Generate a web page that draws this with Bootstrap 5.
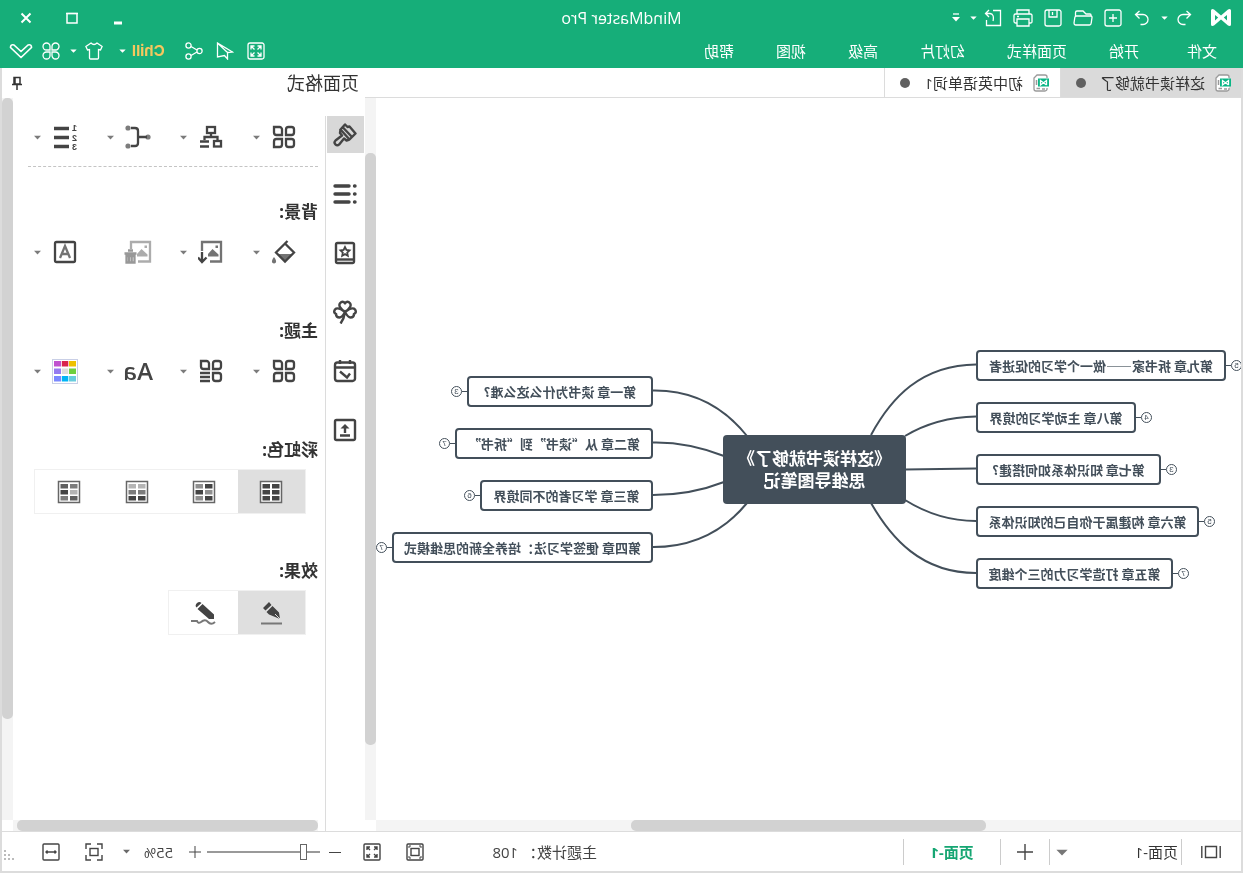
<!DOCTYPE html>
<html lang="zh-CN">
<head>
<meta charset="utf-8">
<meta name="viewport" content="width=device-width, initial-scale=1">
<title>MindMaster Pro</title>
<link href="https://cdn.jsdelivr.net/npm/bootstrap@5.3.0/dist/css/bootstrap.min.css" rel="stylesheet">
<style>
:root{--green:#16ae79;--ink:#444;--line:#dcdcdc;--track:#f4f4f4;--thumb:#d2d2d2;--node:#434f5a}
body{font-family:"Open Sans","Noto Sans CJK SC",sans-serif;font-size:15px;line-height:20px;color:#333;background:#fff;overflow:hidden}
/* the whole window is shown mirrored */
.app-window{height:100vh;min-height:700px;transform:scaleX(-1)}
.app-window button{border:0;background:none;padding:0;color:inherit;display:flex;align-items:center;justify-content:center;flex:none}
svg{display:block;fill:none;stroke:currentColor;stroke-width:2;flex:none}
.solid{fill:currentColor;stroke:none}
.app-head{background:var(--green);color:#fff}
.title-row{height:35px;padding:0 3px}
.title-row .side{flex:1 1 0}
.app-title{font-size:16px}
.menu-row{height:33px;padding:0 10px 2px 26px}
.app-head svg{stroke-width:1.3}
.w8{width:8px}.w18{width:18px}.w20{width:20px}.w22{width:22px}.w24{width:24px}.w28{width:28px}.w30{width:30px}.w31{width:31px}.w32{width:32px}.w38{width:38px}.w43{width:43px}.w45{width:45px}.w46{width:46px}.w48{width:48px}.w59{width:59px}.w96{width:96px}
.logo{margin:0 17px 0 9px}
.menu-list{gap:42px}
.menu-list a{color:#fff;text-decoration:none}
.menu-list a:first-child{margin-right:6px}
.chill{font-weight:700;font-family:Inter,sans-serif;color:#f6c75e!important;margin-left:14px!important}
.app-body{border:solid var(--line);border-width:0 2px}
.doc-tabs{height:30px;border-bottom:1px solid var(--line)}
.app-window .doc-tab{gap:10px;padding:0 15px 0 10px;border-right:1px solid var(--line);height:29px}
.app-window .doc-tab.current{background:#dadada}
.app-window .doc-tab+.doc-tab{margin-left:1px}
.dot{width:10px;height:10px;border-radius:50%;background:#606060;margin-left:4px}
.vbar{width:11px;background:var(--track);flex:none}
.hbar{height:11px;background:var(--track);flex:none}
.thumb{background:var(--thumb);border-radius:5px}
.map-vthumb{height:82%;margin-top:55px}
.map-hthumb{width:41%;height:11px;margin-left:255px}
.map-view{overflow:hidden}
.board{position:relative;width:865px;height:722px;margin:0 auto;flex:none}
.board>svg{position:absolute;inset:0;color:var(--node)}
.topic{position:absolute;display:flex;align-items:center;font-family:"Noto Sans CJK SC",sans-serif;font-size:13px;font-weight:600;color:var(--node)}
.topic.west{right:600px;flex-direction:row-reverse}
.topic.east{left:588px}
.topic .label{width:var(--w);height:31px;border:2px solid var(--node);border-radius:4px;background:#fff;display:flex;align-items:center;justify-content:center;white-space:nowrap}
.topic i{width:5px;height:1px;background:var(--node)}
.topic b{width:11px;height:11px;border:1px solid var(--node);border-radius:50%;font:8px/9px "Liberation Sans",sans-serif;text-align:center}
.center-topic{position:absolute;left:335px;top:337px;width:183px;height:69px;border-radius:4px;background:var(--node);color:#fff;font-size:17px;line-height:22px;font-weight:700;display:flex;align-items:center;justify-content:center;text-align:center}
.side-area{width:363px;flex:none;color:var(--ink)}
.side-head{height:30px;padding:0 9px 0 6px;font-size:18px;color:#333}
.rail{width:40px;flex:none;border-right:1px solid var(--line);margin-top:18px;padding-left:1px;gap:22px}
.rail svg{stroke-width:2.4}
.rail button{width:37px;height:37px}
.rail .current{background:#d8d8d8}
.props{padding:21px 0 0 7px;min-width:0}
.tools{padding-left:16px}
.tools svg{stroke-width:2.3}
.tools .cell{width:73px;height:36px;flex:none}
.tools .cell:last-child{width:54px}
.tools .cell button:first-child{width:36px;height:36px}
.dash{border-top:1px dashed #c4c4c4;margin:11px 15px 33px 0}
.props h2{font-size:17px;line-height:24px;font-weight:700;color:#333;margin:49px 0 10px}
.props .dash+h2{margin-top:0}
.props .choice{border:1px solid #f0f0f0;margin:-3px 0 -4px 12px;width:max-content}
.choice button{width:67px;height:43px}
.choice button:last-child{width:69px}
.choice .current{background:#dfdfdf}
.tools .flat{stroke:none}
.aa{font-size:24px;font-weight:600}
.panel-hthumb{height:11px;margin-right:4px}
.panel-hbar{margin:0 11px 0 7px}
.foot{height:42px;border:solid var(--line);border-width:1px 2px 2px;color:var(--ink)}
.foot svg{stroke-width:1.4}
.bar{width:1px;height:26px;background:#ccc;flex:none}
.page-pick{width:131px;border:0;background:none;appearance:none;padding:0 0 0 3px;color:#333;font-size:15px}
.pick{position:relative}
.pick svg{position:absolute;right:6px;top:7px;pointer-events:none;color:#777}
.page-tab{color:#16a673!important;font-weight:700}
.count{width:160px}
.zoom-range{appearance:none;width:113px;height:18px;background:linear-gradient(#999,#999) center/100% 2px no-repeat;margin:0}
.zoom-range::-webkit-slider-thumb{appearance:none;width:7px;height:16px;background:#fff;border:1px solid #666}
.zoom-range::-moz-range-thumb{width:5px;height:14px;background:#fff;border:1px solid #666;border-radius:0}
</style>
</head>
<body>
<svg width="0" height="0" class="position-absolute" aria-hidden="true">
 <symbol id="caret" viewBox="0 0 8 5"><path class="solid" d="M0 .5h8L4 4.7z"/></symbol>
 <symbol id="four" viewBox="0 0 24 24"><path d="M4.500 2H7.500A2.500 2.500 0 0 1 10 4.500V10H4.500A2.500 2.500 0 0 1 2 7.500V4.500A2.500 2.500 0 0 1 4.500 2zM22 2h-5.500A2.500 2.500 0 0 0 14 4.500V10h5.500A2.500 2.500 0 0 0 22 7.500zM4.500 22h3A2.500 2.500 0 0 0 10 19.500V14H4.500A2.500 2.500 0 0 0 2 16.500v3A2.500 2.500 0 0 0 4.500 22zM22 22h-5.500a2.500 2.500 0 0 1-2.500-2.500V14h5.500a2.500 2.500 0 0 1 2.500 2.500z"/></symbol>
 <symbol id="doc" viewBox="0 0 16 18"><path d="M2 4V3a2 2 0 0 1 2-2h8l3 3v11a2 2 0 0 1-2 2H4a2 2 0 0 1-2-2v-1" stroke="#9a9a9a" stroke-width="1.300" fill="#fff"/><path d="M4 15h3M9 14.500h3.500M12.500 6v5" stroke="#9a9a9a" stroke-width="1.500"/><rect x="0" y="4.500" width="11" height="8" fill="#0bb685" stroke="none"/><path d="M2.500 11V6.500L8.500 11V6.500L2.500 11" stroke="#fff" stroke-width="1.300"/></symbol>
</svg>

<div class="app-window d-flex flex-column">
<header class="app-head">
 <div class="title-row d-flex align-items-center">
  <div class="side d-flex align-items-center">
   <svg class="logo" width="20" height="17" viewBox="0 0 20 17"><path class="solid" d="M0 1.500Q0 0 1.500 0L3 .5 10 6.500 17 .5 18.500 0Q20 0 20 1.500v14Q20 17 18.500 17L17 16.500 10 10.500 3 16.500 1.500 17Q0 17 0 15.500zM4 6v5.500L7.200 8.500zM16 6v5.500l-3.200-3z" fill-rule="evenodd"/></svg>
   <button class="w20" aria-label="撤销"><svg width="16" height="16" viewBox="0 0 16 16"><path d="M5.500 1 1.500 4.500l4 4M1.500 4.500H9a5 5 0 0 1 0 10H6.500"/></svg></button>
   <button class="w18" aria-label="撤销列表"><svg width="7" height="4"><use href="#caret"/></svg></button>
   <button class="w28" aria-label="重做"><svg width="16" height="16" viewBox="0 0 16 16"><path d="m10.500 1 4 3.500-4 4M14.500 4.500H7a5 5 0 0 0 0 10h2.500"/></svg></button>
   <button class="w30" aria-label="新建"><svg width="18" height="18" viewBox="0 0 18 18"><rect x="1" y="1" width="16" height="16" rx="2"/><path d="M9 5v8M5 9h8"/></svg></button>
   <button class="w30" aria-label="打开"><svg width="20" height="17" viewBox="0 0 20 17"><path d="M2 7V6q0-1 1-1h4l3-3h6q1.500 0 1.500 1.500V7M2 7h14.500q1.500 0 1.700 1.500L19 14q0 2-1.500 2h-14Q2 16 1.800 14L1 8.500Q1 7 2 7z"/></svg></button>
   <button class="w30" aria-label="保存"><svg width="18" height="18" viewBox="0 0 18 18"><rect x="1" y="1" width="16" height="16" rx="2"/><path d="M5 1v7h8V1M9.500 3v3"/></svg></button>
   <button class="w30" aria-label="打印"><svg width="20" height="18" viewBox="0 0 20 18"><path d="M4 5V1h12v4M4 14H2.500Q1 14 1 12.500v-6Q1 5 2.500 5h15Q19 5 19 6.500v6q0 1.500-1.500 1.500H16M4 10h12v7H4zM14 7.500h2"/></svg></button>
   <button class="w30" aria-label="导出"><svg width="18" height="18" viewBox="0 0 18 18"><path d="M9 1.500H1.500v15h14V11M16.500 4.500H12Q7.500 5 9 12M13 1l3.500 3.500L13 8"/></svg></button>
   <button class="w8" aria-label="导出列表"><svg width="7" height="4"><use href="#caret"/></svg></button>
   <button class="w28" aria-label="更多"><svg width="8" height="9" viewBox="0 0 8 9"><path d="M1 1h6"/><path class="solid" d="M0 4h8L4 8.500z"/></svg></button>
  </div>
  <div class="app-title">MindMaster Pro</div>
  <div class="side d-flex justify-content-end">
   <button class="w46" aria-label="最小化"><svg width="12" height="14" viewBox="0 0 12 14"><path d="M2 12h8" stroke-width="3"/></svg></button>
   <button class="w46" aria-label="最大化"><svg width="12" height="12" viewBox="0 0 12 12"><path d="M1 1.500h10V11H1z" stroke-width="1.500"/><path d="M0 1.500h12"/></svg></button>
   <button class="w46" aria-label="关闭"><svg width="12" height="12" viewBox="0 0 12 12"><path d="m1.500 1.500 9 9m0-9-9 9" stroke-width="2"/></svg></button>
  </div>
 </div>
 <div class="menu-row d-flex align-items-center">
  <nav class="menu-list d-flex"><a href="#">文件</a><a href="#">开始</a><a href="#">页面样式</a><a href="#">幻灯片</a><a href="#">高级</a><a href="#">视图</a><a href="#">帮助</a></nav>
  <div class="ms-auto d-flex align-items-center">
   <button class="w31" aria-label="全屏"><svg width="18" height="18" viewBox="0 0 18 18"><rect x="1" y="1" width="16" height="16" rx="2"/><path d="M4 7.500V4h3.500M4 4l3.500 3.500M10.500 4H14v3.500M14 4l-3.500 3.500M4 10.500V14h3.500M4 14l3.500-3.500M14 10.500V14h-3.500M14 14l-3.500-3.500"/></svg></button>
   <button class="w31" aria-label="发送"><svg width="18" height="18" viewBox="0 0 18 18"><path d="M16.500 1 1.500 10l5 .5V17l3-3.500 7 1.500zM16.500 1 6.500 10.500"/></svg></button>
   <button class="w31" aria-label="分享"><svg width="18" height="18" viewBox="0 0 18 18"><circle cx="3.500" cy="9" r="2.600"/><circle cx="14.500" cy="3.500" r="2.600"/><circle cx="14.500" cy="14.500" r="2.600"/><path d="m6 8 6-3.500M6 10l6 3.500"/></svg></button>
   <button class="chill">Chill</button>
   <button class="w18" aria-label="Chill 菜单"><svg width="7" height="4"><use href="#caret"/></svg></button>
   <button class="w32 ms-1" aria-label="主题"><svg width="18" height="18" viewBox="0 0 18 18"><path d="M6 1 .9 4.500 2.500 8l2-.5V16q0 1 1 1h7q1 0 1-1V7.500l2 .5 1.600-3.500L12 1q-3 3-6 0z"/></svg></button>
   <button class="w8" aria-label="主题列表"><svg width="7" height="4"><use href="#caret"/></svg></button>
   <button class="w38" aria-label="应用"><svg width="18" height="18" viewBox="0 0 18 18"><path d="M8 8H4.500A3.500 3.500 0 1 1 8 4.500zM10 8h3.500A3.500 3.500 0 1 0 10 4.500zM8 10H4.500A3.500 3.500 0 1 0 8 13.500zM10 10h3.500A3.500 3.500 0 1 1 10 13.500z"/></svg></button>
   <button class="w22" aria-label="收起"><svg width="24" height="16" viewBox="0 0 24 16"><path d="M1.500 4.500Q1.500 1 5 2L12 8.500 19 2q3.500-1 3.500 2.500L12 14.500z" stroke-width="1.700" stroke-linejoin="round"/></svg></button>
  </div>
 </div>
</header>

<main class="app-body d-flex flex-grow-1" style="min-height:0">
 <section class="d-flex flex-column flex-grow-1" style="min-width:0">
  <div class="doc-tabs d-flex">
   <button class="doc-tab current"><svg width="16" height="18"><use href="#doc"/></svg>这样读书就够了<span class="dot"></span></button>
   <button class="doc-tab"><svg width="16" height="18"><use href="#doc"/></svg>初中英语单词1<span class="dot"></span></button>
  </div>
  <div class="d-flex flex-grow-1" style="min-height:0">
   <div class="map-view flex-grow-1">
    <div class="board">
     <svg width="865" height="722" viewBox="0 0 865 722"><path d="M265 266.500C320 267 350 300 370 337M265 318.500C292 319 316 326 336 338M265 370.500 336 371.500M265 423C290 423 312 417 336 402M265 475C320 475 350 440 370 405M588 292.500C550 292 518 308 494 338M588 344.500C562 344 540 349 517 358M588 397C562 397 540 393 517 384M588 449C550 449 518 434 494 405"/></svg>
     <div class="center-topic">《这样读书就够了》<br>思维导图笔记</div>
     <div class="topic west" style="top:252px;--w:250px"><span class="label">第九章 拆书家——做一个学习的促进者</span><i></i><b>5</b></div>
     <div class="topic west" style="top:304px;--w:160px"><span class="label">第八章 主动学习的境界</span><i></i><b>4</b></div>
     <div class="topic west" style="top:356px;--w:185px"><span class="label">第七章 知识体系如何搭建?</span><i></i><b>3</b></div>
     <div class="topic west" style="top:408px;--w:223px"><span class="label">第六章 构建属于你自己的知识体系</span><i></i><b>5</b></div>
     <div class="topic west" style="top:460px;--w:197px"><span class="label">第五章 打造学习力的三个维度</span><i></i><b>7</b></div>
     <div class="topic east" style="top:278px;--w:186px"><span class="label">第一章 读书为什么这么难?</span><i></i><b>3</b></div>
     <div class="topic east" style="top:330px;--w:198px"><span class="label">第二章 从“读书”到“拆书”</span><i></i><b>7</b></div>
     <div class="topic east" style="top:382px;--w:173px"><span class="label">第三章 学习者的不同境界</span><i></i><b>6</b></div>
     <div class="topic east" style="top:434px;--w:261px"><span class="label">第四章 便签学习法：培养全新的思维模式</span><i></i><b>7</b></div>
    </div>
   </div>
   <div class="vbar"><div class="thumb map-vthumb"></div></div>
  </div>
  <div class="hbar" style="margin-right:11px"><div class="thumb map-hthumb"></div></div>
 </section>

 <aside class="side-area d-flex flex-column">
  <div class="side-head d-flex align-items-center justify-content-between">页面格式
   <button aria-label="固定"><svg width="12" height="14" viewBox="0 0 12 14"><path d="M3 1.500h6V8H3zM1 8.500h10M6 9v5M8 2v6" stroke-width="1.500"/></svg></button></div>
  <div class="d-flex flex-grow-1">
   <div class="rail d-flex flex-column">
    <button class="current" aria-label="页面格式"><svg width="24" height="24" viewBox="0 0 24 24"><path stroke-linejoin="round" d="M16.500 6.500 12 1.500 9.500 4 7.500 3.500 1.500 10.500 7.500 16.500zM16.500 6.500 17 10l-2 2.500 6.500 5a2.600 2.600 0 0 1-3.700 3.900L13 15.500l-2.500 2-3-1M14.500 4 5 14"/></svg></button>
    <button aria-label="大纲"><svg width="24" height="24" viewBox="0 0 24 24"><path d="M2 4h.5M2 12h.5M2 20h.5" stroke-width="3.400" stroke-linecap="round"/><path d="M8 4h14M8 12h14M8 20h14" stroke-width="3.400" stroke-linecap="round"/></svg></button>
    <button aria-label="图标"><svg width="22" height="24" viewBox="0 0 22 24"><rect x="2" y="2" width="18" height="20" rx="1.500"/><path d="M2 18.500h18"/><path d="m11 6 1.400 2.900 3.100.4-2.300 2.200.6 3.200-2.800-1.600-2.800 1.600.6-3.200-2.300-2.200 3.100-.4z" stroke-width="1.800"/></svg></button>
    <button aria-label="剪贴画"><svg width="24" height="24" viewBox="0 0 24 24"><path d="M12 12Q4.500 6.500 7 3.200 9.500.2 12 3.200 14.500.2 17 3.200 19.500 6.500 12 12q7.500-5.500 10-2.500 2 3-1 4.500 0 3.500-3.500 3.500-2.500 0-5.500-5.500-3 5.500-5.500 5.500Q3 17.500 3 14 0 12.500 2 9.500 4.500 6.500 12 12q1 7 4.500 11.500"/></svg></button>
    <button aria-label="任务"><svg width="24" height="24" viewBox="0 0 24 24"><rect x="2" y="3.500" width="20" height="18.500" rx="2.500"/><path d="M2 8.500h20M7 1v4M17 1v4M17 12.500l-7 6-3-4"/></svg></button>
    <button aria-label="导出"><svg width="24" height="24" viewBox="0 0 24 24"><rect x="2" y="2" width="20" height="20" rx="1.500"/><path d="M7 17.500h10M12 15V9"/><path class="solid" d="m12 6 4.500 4.500h-9z"/></svg></button>
   </div>
   <div class="d-flex flex-column flex-grow-1" style="min-width:0">
    <div class="d-flex flex-grow-1">
     <div class="props flex-grow-1">
      <div class="tools d-flex">
       <div class="cell d-flex"><button aria-label="布局"><svg width="24" height="24"><use href="#four"/></svg></button><button class="w18" aria-label="布局列表"><svg width="7" height="5" opacity=".7"><use href="#caret"/></svg></button></div>
       <div class="cell d-flex"><button aria-label="结构"><svg width="24" height="24" viewBox="0 0 24 24"><rect x="8" y="2" width="8" height="6"/><path d="M12 8v4M5.500 15v-3h13v3"/><rect x="2" y="16" width="7" height="5.500"/><path d="M14 16.500h9M14 21.500h9"/></svg></button><button class="w18" aria-label="结构列表"><svg width="7" height="5" opacity=".7"><use href="#caret"/></svg></button></div>
       <div class="cell d-flex"><button aria-label="连线"><svg width="26" height="24" viewBox="0 0 26 24"><path d="M4 12h9M20 3h-4q-3 0-3 3v12q0 3 3 3h4"/><circle class="solid" cx="3" cy="12" r="2.600" opacity=".7"/><circle class="solid" cx="23" cy="3" r="2.600" opacity=".7"/><circle class="solid" cx="23" cy="21" r="2.600" opacity=".7"/></svg></button><button class="w18" aria-label="连线列表"><svg width="7" height="5" opacity=".7"><use href="#caret"/></svg></button></div>
       <div class="cell d-flex"><button aria-label="编号"><svg width="26" height="28" viewBox="0 0 26 28"><path d="M9 5.500h15M9 14.500h15M9 23.500h15" stroke-width="3.600"/><g class="solid" font-family="Liberation Sans" font-size="9" font-weight="700"><text x="1" y="8">1</text><text x="1" y="17.500">2</text><text x="1" y="27">3</text></g></svg></button><button class="w18" aria-label="编号列表"><svg width="7" height="5" opacity=".7"><use href="#caret"/></svg></button></div>
      </div>
      <div class="dash"></div>
      <h2>背景:</h2>
      <div class="tools d-flex">
       <div class="cell d-flex"><button aria-label="背景颜色"><svg width="26" height="26" viewBox="0 0 26 26"><path d="M11.500 4 21 13.500 12 22.500 3 13.500 12 4.500 9.500 2"/><path class="solid" opacity=".75" d="M4 15h16l-8 8zM23 18q3 4 1.700 5.800-1.700 1.500-3.400 0Q20 22 23 18z"/></svg></button><button class="w18" aria-label="背景颜色列表"><svg width="7" height="5" opacity=".7"><use href="#caret"/></svg></button></div>
       <div class="cell d-flex"><button aria-label="背景图片"><svg width="26" height="26" viewBox="0 0 26 26"><path d="M14 22.500H3V3h19v9" opacity=".75"/><path class="solid" opacity=".75" d="M5.500 17.500v-2l6-5.500 4.500 5v2.500zM6 6.500h2.500V9H6z"/><path d="M22 13v10M17.500 18.500l4.500 4.500 4-4.500"/></svg></button><button class="w18" aria-label="背景图片列表"><svg width="7" height="5" opacity=".7"><use href="#caret"/></svg></button></div>
       <div class="cell d-flex"><button aria-label="删除背景图片" style="opacity:.55"><svg width="28" height="26" viewBox="0 0 28 26"><path d="M14 22.500H2V3h19v7" opacity=".8"/><path class="solid" opacity=".8" d="M4.500 17.500v-2l6-5.500 4.500 5v2.500zM5 6.500h2.500V9H5z"/><path d="M15.500 14.500h12M19 11.500h5M17.500 17v6.500h8V17zM20.300 17v6M23 17v6"/></svg></button></div>
       <div class="cell d-flex"><button aria-label="水印"><svg width="24" height="24" viewBox="0 0 24 24"><rect x="2" y="2" width="20" height="20" rx="1.500"/><path d="m7 18 5-12 5 12M9 14h6" opacity=".75"/></svg></button><button class="w18" aria-label="水印列表"><svg width="7" height="5" opacity=".7"><use href="#caret"/></svg></button></div>
      </div>
      <h2>主题:</h2>
      <div class="tools d-flex">
       <div class="cell d-flex"><button aria-label="主题样式"><svg width="24" height="24"><use href="#four"/></svg></button><button class="w18" aria-label="主题样式列表"><svg width="7" height="5" opacity=".7"><use href="#caret"/></svg></button></div>
       <div class="cell d-flex"><button aria-label="主题列表"><svg width="24" height="24" viewBox="0 0 24 24"><path d="M4.500 2H7.500A2.500 2.500 0 0 1 10 4.500V10H4.500A2.500 2.500 0 0 1 2 7.500V4.500A2.500 2.500 0 0 1 4.500 2zM22 2h-5.500A2.500 2.500 0 0 0 14 4.500V10h5.500A2.500 2.500 0 0 0 22 7.500zM4.500 22h3A2.500 2.500 0 0 0 10 19.500V14H4.500A2.500 2.500 0 0 0 2 16.500v3A2.500 2.500 0 0 0 4.500 22zM13 14h10M13 18h10M13 22h10"/></svg></button><button class="w18" aria-label="展开"><svg width="7" height="5" opacity=".7"><use href="#caret"/></svg></button></div>
       <div class="cell d-flex"><button class="aa">Aa</button><button class="w18" aria-label="字体列表"><svg width="7" height="5" opacity=".7"><use href="#caret"/></svg></button></div>
       <div class="cell d-flex"><button aria-label="主题颜色"><svg class="flat" width="26" height="25" viewBox="0 0 26 25"><rect x=".5" y=".5" width="25" height="24" fill="#fff" stroke="#c9cfe6" stroke-width="1"/><path fill="#eec000" d="M2 2h7v5.500H2z"/><path fill="#d9234d" d="M9.700 2h6.500v5.500H9.700z"/><path fill="#c052cf" d="M17 2h7v5.500h-7z"/><path fill="#6fcf3f" d="M2 9.500h7V15H2z"/><path fill="#ddd" d="M9.700 9.500h6.500V15H9.700z"/><path fill="#967bf0" d="M17 9.500h7V15h-7z"/><path fill="#68cddd" d="M2 17h7v5.500H2z"/><path fill="#00b4f5" d="M9.700 17h6.500v5.500H9.700z"/><path fill="#7b88ff" d="M17 17h7v5.500h-7z"/></svg></button><button class="w18" aria-label="颜色列表"><svg width="7" height="5" opacity=".7"><use href="#caret"/></svg></button></div>
      </div>
      <h2>彩虹色:</h2>
      <div class="choice d-flex">
       <button class="current" aria-label="单色"><svg width="24" height="24" viewBox="0 0 24 24"><rect x="1.500" y="1.500" width="21" height="21" fill="#fff" stroke="#666" stroke-width="1.500"/><path class="solid" d="M3.500 4H11v4.500H3.500zM13 4h7.500v4.500H13zM3.500 10H11v4.500H3.500zM13 10h7.500v4.500H13zM3.500 16H11v4.500H3.500zM13 16h7.500v4.500H13z"/></svg></button>
       <button aria-label="彩虹 1"><svg width="24" height="24" viewBox="0 0 24 24"><rect x="1.500" y="1.500" width="21" height="21" stroke="#666" stroke-width="1.500"/><path class="solid" d="M3.500 4H11v4.500H3.500zM13 10h7.500v4.500H13zM3.500 16H11v4.500H3.500z"/><path class="solid" opacity=".6" d="M13 4h7.500v4.500H13zM3.500 10H11v4.500H3.500zM13 16h7.500v4.500H13z"/></svg></button>
       <button aria-label="彩虹 2"><svg width="24" height="24" viewBox="0 0 24 24"><rect x="1.500" y="1.500" width="21" height="21" stroke="#666" stroke-width="1.500"/><path class="solid" opacity=".4" d="M3.500 4H11v4.500H3.500zM13 4h7.500v4.500H13z"/><path class="solid" opacity=".7" d="M3.500 10H11v4.500H3.500zM13 10h7.500v4.500H13z"/><path class="solid" d="M3.500 16H11v4.500H3.500zM13 16h7.500v4.500H13z"/></svg></button>
       <button aria-label="彩虹 3"><svg width="24" height="24" viewBox="0 0 24 24"><rect x="1.500" y="1.500" width="21" height="21" stroke="#666" stroke-width="1.500"/><path class="solid" opacity=".7" d="M3.500 4H11v4.500H3.500zM13 16h7.500v4.500H13z"/><path class="solid" opacity=".85" d="M13 4h7.500v4.500H13zM3.500 16H11v4.500H3.500z"/><path class="solid" opacity=".4" d="M3.500 10H11v4.500H3.500z"/><path class="solid" d="M13 10h7.500v4.500H13z"/></svg></button>
      </div>
      <h2>效果:</h2>
      <div class="choice d-flex">
       <button class="current" aria-label="普通"><svg width="24" height="24" viewBox="0 0 24 24"><path class="solid" d="m14 1 6 6-2.500 2.500L11.500 4zM10.500 5l6 6-2.500 2.500L3 18 4 11.500z"/><path d="m3 18 5-5" stroke="#ddd" stroke-width="1"/><path d="M1 22.500h21" stroke="#777"/></svg></button>
       <button aria-label="手绘"><svg width="26" height="24" viewBox="0 0 26 24"><path class="solid" d="M14.500 2q2-2 4.500 0 2.500 2.500.5 4.500zM13.500 3l5 5L7 18H2v-4.500z"/><path d="M1 21q4 3.500 7 0t7 0q3 2 4-1h6" stroke="#777"/></svg></button>
      </div>
     </div>
     <div class="vbar"><div class="thumb" style="height:86%"></div></div>
    </div>
    <div class="hbar panel-hbar"><div class="thumb panel-hthumb"></div></div>
   </div>
  </div>
 </aside>
</main>

<footer class="foot d-flex align-items-center">
 <button class="w59" aria-label="页面视图"><svg width="20" height="14" viewBox="0 0 20 14"><path d="M.8 1v12M19.200 1v12M4.500 1.500h11v11h-11z"/></svg></button>
 <span class="bar"></span>
 <span class="pick"><select class="page-pick" aria-label="选择页面"><option>页面-1</option></select><svg width="12" height="7"><use href="#caret"/></svg></span>
 <span class="bar"></span>
 <button class="w48" aria-label="添加页面"><svg width="18" height="18" viewBox="0 0 18 18"><path d="M9 1v16M1 9h16"/></svg></button>
 <span class="bar"></span>
 <button class="w96 page-tab">页面-1</button>
 <span class="bar"></span>
 <div class="ms-auto d-flex align-items-center">
  <span class="count">主题计数： 108</span>
  <button class="w43" aria-label="适应页面"><svg width="18" height="18" viewBox="0 0 18 18"><rect x="1" y="1" width="16" height="16" rx="1"/><rect x="5" y="5.500" width="8" height="7"/><path d="M3 5V3h2M13 3h2v2M3 13v2h2M13 15h2v-2" stroke-width="1"/></svg></button>
  <button class="w43" aria-label="全屏显示"><svg width="18" height="18" viewBox="0 0 18 18"><rect x="1" y="1" width="16" height="16" rx="1"/><path d="M4 7V4h3M4 4l3 3M11 4h3v3M14 4l-3 3M4 11v3h3M4 14l3-3M14 11v3h-3M14 14l-3-3"/></svg></button>
  <button class="w31" aria-label="缩小"><svg width="12" height="12" viewBox="0 0 12 12"><path d="M0 6.500h12" stroke-width="1"/></svg></button>
  <input class="zoom-range" type="range" min="0" max="100" value="12" aria-label="缩放">
  <button class="w24" aria-label="放大"><svg width="12" height="12" viewBox="0 0 12 12"><path d="M0 6h12M6 0v12" stroke-width="1"/></svg></button>
  <button class="w45 ps-1">55%</button>
  <button class="w22" aria-label="缩放列表"><svg width="7" height="5" opacity=".8"><use href="#caret"/></svg></button>
  <button class="w43" aria-label="适合窗口"><svg width="18" height="18" viewBox="0 0 18 18"><path d="M1 6V1h5M12 1h5v5M1 12v5h5M17 12v5h-5"/><rect x="5" y="5.500" width="8" height="7"/></svg></button>
  <button class="w43" aria-label="适合宽度"><svg width="18" height="18" viewBox="0 0 18 18"><rect x="1" y="1" width="16" height="16" rx="1"/><path d="M4 9h10M5.500 7.500 4 9l1.500 1.500M12.500 7.500 14 9l-1.500 1.500"/></svg></button>
  <svg class="w28 align-self-end" height="12" viewBox="0 0 28 12"><path fill="#bbb" stroke="none" d="M24 0h2v2h-2zM20 4h2v2h-2zM24 4h2v2h-2zM16 8h2v2h-2zM20 8h2v2h-2zM24 8h2v2h-2z"/></svg>
 </div>
</footer>
</div>
<script src="https://cdn.jsdelivr.net/npm/bootstrap@5.3.0/dist/js/bootstrap.bundle.min.js"></script>
</body>
</html>
